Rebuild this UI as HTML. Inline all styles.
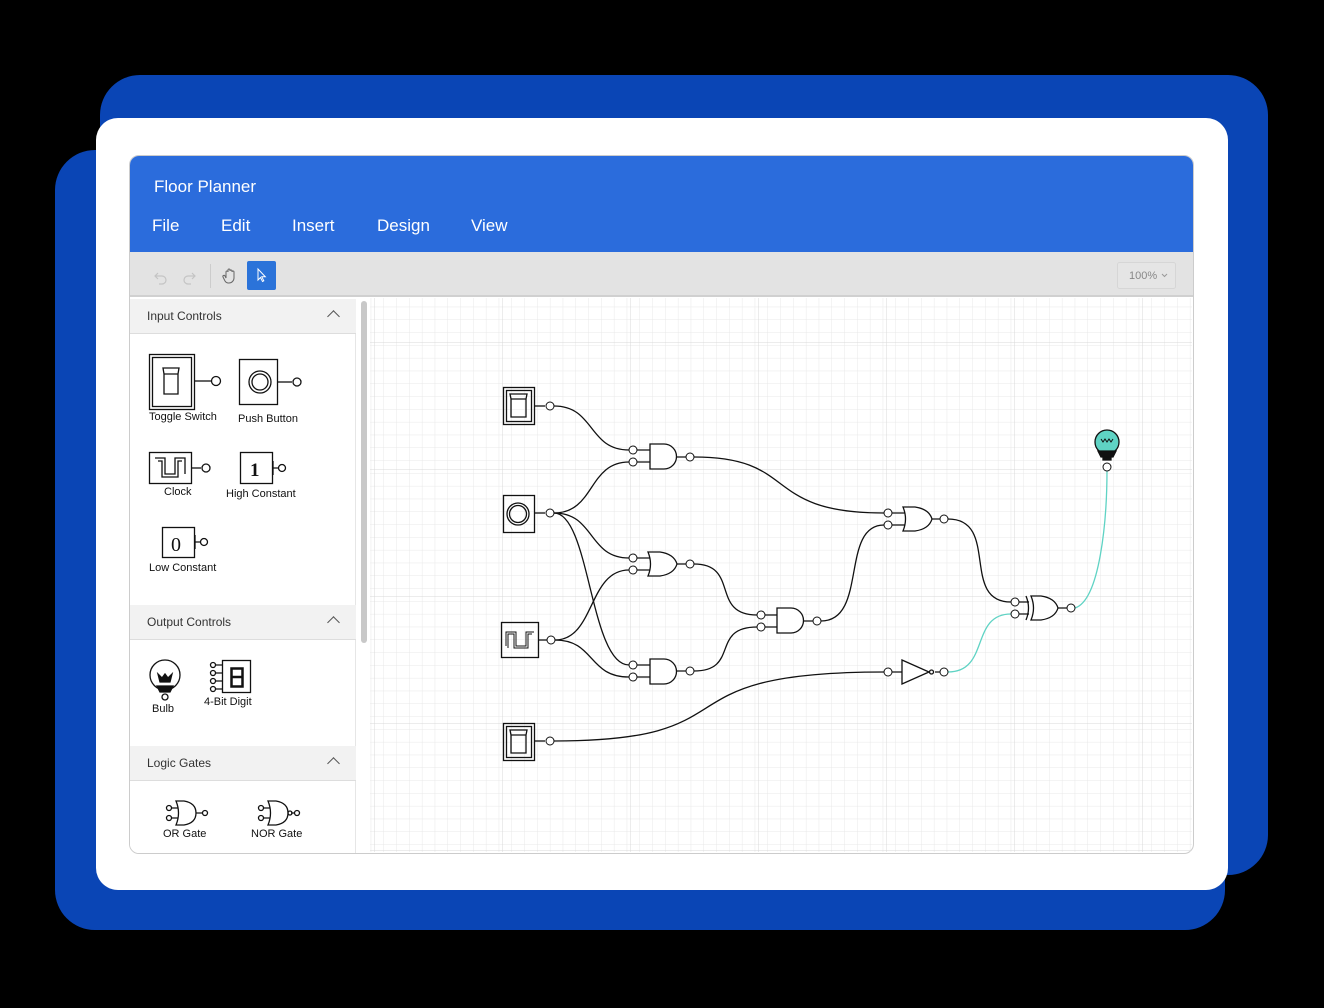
<!DOCTYPE html>
<html><head><meta charset="utf-8"><style>
*{margin:0;padding:0;box-sizing:border-box}
body{width:1324px;height:1008px;background:#000;position:relative;overflow:hidden;font-family:"Liberation Sans",sans-serif}
.b1{position:absolute;left:100px;top:75px;width:1168px;height:800px;background:#0a45b5;border-radius:40px}
.b2{position:absolute;left:55px;top:150px;width:1170px;height:780px;background:#0a45b5;border-radius:40px}
.card{position:absolute;left:96px;top:118px;width:1132px;height:772px;background:#fff;border-radius:22px}
.app{position:absolute;left:129px;top:155px;width:1065px;height:699px;border:1px solid #ccc;border-radius:10px;overflow:hidden;background:#fff}
.hdr{position:absolute;left:0;top:0;width:100%;height:96px;background:#2b6cdc;color:#fff}
.title{position:absolute;left:24px;top:21px;font-size:17px}
.menu span{position:absolute;top:60px;font-size:17px}
.tb{position:absolute;left:0;top:96px;width:100%;height:45px;background:#e3e3e3;border-bottom:2px solid #d0d0d0}
.side{position:absolute;left:0;top:143px;width:226px;height:560px;background:#fff;border-right:1px solid #e6e6e6}
.sh{position:absolute;left:0;width:226px;height:35px;background:#f2f2f2;border-bottom:1px solid #ddd;font-size:12px;color:#333;padding:10px 0 0 17px}
.sh i{position:absolute;right:18px;top:13px;width:9px;height:9px;border-left:1.3px solid #555;border-top:1.3px solid #555;transform:rotate(45deg)}
.lbl{position:absolute;font-size:11px;color:#111;white-space:nowrap}
</style></head><body>
<div class="b1"></div><div class="b2"></div>
<div class="card"></div>
<div class="app">
 <div class="hdr"><div class="title">Floor Planner</div>
  <div class="menu"><span style="left:22px">File</span><span style="left:91px">Edit</span><span style="left:162px">Insert</span><span style="left:247px">Design</span><span style="left:341px">View</span></div></div>
 <div class="tb">
  <svg width="1065" height="45" style="position:absolute;left:0;top:0">
   <path d="M26 24 l-3 -3 l3 -3 M23 21 h7 a4 4 0 0 1 0 8 h-3" fill="none" stroke="#c4c4c4" stroke-width="1.2" transform="translate(2,3)"/>
   <path d="M66 24 l3 -3 l-3 -3 M69 21 h-7 a4 4 0 0 0 0 8 h3" fill="none" stroke="#c4c4c4" stroke-width="1.2" transform="translate(-4,3)"/>
   <line x1="80.5" y1="12" x2="80.5" y2="36" stroke="#ccc"/>
   <path d="M96 26 v-6 a1 1 0 0 1 2 0 v-2 a1 1 0 0 1 2 0 v1 a1 1 0 0 1 2 0 v1 a1 1 0 0 1 2 0 v6 a5 5 0 0 1 -5 5 h-1 a4 4 0 0 1 -3 -2 l-2 -4 a1 1 0 0 1 2 -1 z" fill="none" stroke="#666" stroke-width="1"/>
   <rect x="117" y="9" width="29" height="29" rx="2" fill="#2b73d9"/>
   <path d="M128 17 v11 l2.5 -2.5 l2 4 l1.3 -.7 l-2 -4 h3.5 z" fill="none" stroke="#fff" stroke-width="1"/>
   <rect x="987.5" y="10.5" width="58" height="26" rx="2" fill="#e5e5e5" stroke="#d6d6d6"/>
   <text x="999" y="27" font-size="11" fill="#888" font-family="Liberation Sans">100%</text>
   <path d="M1032 22 l2.5 2.5 l2.5 -2.5" fill="none" stroke="#999"/>
  </svg>
 </div>
 <div class="side">
  <div class="sh" style="top:0">Input Controls<i></i></div>
  <div class="sh" style="top:306px">Output Controls<i></i></div>
  <div class="sh" style="top:447px">Logic Gates<i></i></div>
  <div class="lbl" style="left:19px;top:112px">Toggle Switch</div>
  <div class="lbl" style="left:108px;top:114px">Push Button</div>
  <div class="lbl" style="left:34px;top:187px">Clock</div>
  <div class="lbl" style="left:96px;top:189px">High Constant</div>
  <div class="lbl" style="left:19px;top:263px">Low Constant</div>
  <div class="lbl" style="left:22px;top:404px">Bulb</div>
  <div class="lbl" style="left:74px;top:397px">4-Bit Digit</div>
  <div class="lbl" style="left:33px;top:529px">OR Gate</div>
  <div class="lbl" style="left:121px;top:529px">NOR Gate</div>
 </div>
 <div style="position:absolute;left:231px;top:145px;width:6px;height:342px;background:#c8c8c8;border-radius:3px"></div>
</div>
<svg width="1324" height="1008" style="position:absolute;left:0;top:0">
 <defs>
  <pattern id="mi" x="0" y="0" width="12.8" height="12.8" patternUnits="userSpaceOnUse">
   <path d="M12.8 0 V12.8 M0 12.8 H12.8" stroke="#e8e8e8" stroke-width="1" fill="none"/></pattern>
  <pattern id="ma" x="374" y="342" width="128" height="127" patternUnits="userSpaceOnUse">
   <path d="M0 0 V127 M0 0 H128" stroke="#d8d8d8" stroke-width="1" fill="none"/></pattern>
 </defs>
 <rect x="370" y="298" width="822" height="554" fill="url(#mi)"/>
 <rect x="370" y="298" width="822" height="554" fill="url(#ma)"/>
 <text x="250" y="476" font-size="19" font-weight="bold" font-family="Liberation Serif" fill="#111">1</text>
 <text x="171" y="551" font-size="20" font-family="Liberation Serif" fill="#111">0</text>
 <g fill="none" stroke="#111" stroke-width="1.3">
  <rect x="149.5" y="354.5" width="45" height="55"/><rect x="152.5" y="357.5" width="39" height="49"/>
  <path d="M163 368 h16 l-1 6 h-14 z M164 374 v20 h14 v-20"/>
  <path d="M195 381 h16"/><circle cx="216" cy="381" r="4.5"/>
  <rect x="239.5" y="359.5" width="38" height="45"/><circle cx="260" cy="382" r="11"/><circle cx="260" cy="382" r="8"/>
  <path d="M278 382 h14"/><circle cx="297" cy="382" r="4"/>
  <rect x="149.5" y="452.5" width="42" height="31"/><path d="M155 458 h10 v16 h10 v-16 h10 v16 M158 461 h4 v16 h16 v-16 h4"/>
  <path d="M192 468 h9"/><circle cx="206" cy="468" r="4"/>
  <rect x="240.5" y="452.5" width="32" height="31"/><path d="M273 461 v14 M273 468 h5"/><circle cx="282" cy="468" r="3.5"/>
  <rect x="162.5" y="527.5" width="32" height="30"/><path d="M195 535 v14 M195 542 h5"/><circle cx="204" cy="542" r="3.5"/>
  <circle cx="165" cy="675" r="15"/><path d="M158 674 l4 4 l3 -4 l3 4 l4 -4 l-2 8 h-10 z" fill="#111"/><path d="M157 686 h16 l-3 6 h-10z" fill="#111"/><circle cx="165" cy="697" r="3"/>
  <rect x="222.5" y="660.5" width="28" height="32"/><rect x="231.5" y="668.5" width="11" height="18" stroke-width="2.5"/><path d="M232 677 h10" stroke-width="2.5"/>
  <path d="M216 665 h6 M216 673 h6 M216 681 h6 M216 689 h6"/><circle cx="213" cy="665" r="2.5"/><circle cx="213" cy="673" r="2.5"/><circle cx="213" cy="681" r="2.5"/><circle cx="213" cy="689" r="2.5"/>
  <path d="M176 801 h8 q12 2 12 12 q0 10 -12 12 h-8 q5 -12 0 -24 z M172 808 h6 M172 818 h6 M196 813 h6"/><circle cx="169" cy="808" r="2.5"/><circle cx="169" cy="818" r="2.5"/><circle cx="205" cy="813" r="2.5"/>
  <path d="M268 801 h8 q12 2 12 12 q0 10 -12 12 h-8 q5 -12 0 -24 z M264 808 h6 M264 818 h6 M291 813 h4"/><circle cx="261" cy="808" r="2.5"/><circle cx="261" cy="818" r="2.5"/><circle cx="290" cy="813" r="2"/><circle cx="297" cy="813" r="2.5"/>

  <rect x="503.5" y="387.5" width="31" height="37"/><rect x="506.5" y="390.5" width="25" height="31"/><path d="M510 394 h17 l-1 5 h-15z M511 399 v18 h15 v-18"/>
  <path d="M535 406 h10"/>
  <rect x="503.5" y="495.5" width="31" height="37"/><circle cx="518" cy="514" r="11"/><circle cx="518" cy="514" r="8.5"/><path d="M535 513 h10"/>
  <rect x="501.5" y="622.5" width="37" height="35"/><path d="M506 646 v-14 h10 v14 h10 v-14 h8 M508 648 v-14 h6 v14 h14 v-14 h4" stroke-width="1"/><path d="M539 640 h8"/>
  <rect x="503.5" y="723.5" width="31" height="37"/><rect x="506.5" y="726.5" width="25" height="31"/><path d="M510 730 h17 l-1 5 h-15z M511 735 v18 h15 v-18"/><path d="M535 741 h10"/>
  <path d="M554 406 C 595 406, 588 450, 629 450"/>
  <path d="M554 513 C 595 513, 588 462, 629 462"/>
  <path d="M554 513 C 595 513, 588 558, 629 558"/>
  <path d="M554 513 C 590 513, 590 665, 629 665"/>
  <path d="M555 640 C 595 640, 588 570, 629 570"/>
  <path d="M555 640 C 595 640, 588 677, 629 677"/>
  <path d="M694 457 C 800 457, 760 513, 884 513"/>
  <path d="M694 564 C 740 564, 710 615, 757 615"/>
  <path d="M694 671 C 740 671, 710 627, 757 627"/>
  <path d="M821 621 C 868 621, 840 525, 884 525"/>
  <path d="M948 519 C 1000 519, 960 602, 1011 602"/>
  <path d="M554 741 C 760 741, 650 672, 884 672"/>
  <path d="M637 450 h13 M637 462 h13 M676 457 h10"/><path d="M650 444 h14 a12.5 12.5 0 0 1 0 25 h-14 z" fill="#fff"/>
  <path d="M637 558 h13 M637 570 h13 M677 564 h9"/><path d="M648 552 h12 q14 2 17 12 q-3 10 -17 12 h-12 q5 -12 0 -24 z" fill="#fff"/>
  <path d="M637 665 h13 M637 677 h13 M676 671 h10"/><path d="M650 659 h14 a12.5 12.5 0 0 1 0 25 h-14 z" fill="#fff"/>
  <path d="M765 615 h13 M765 627 h13 M803 621 h10"/><path d="M777 608 h14 a12.5 12.5 0 0 1 0 25 h-14 z" fill="#fff"/>
  <path d="M892 513 h13 M892 525 h13 M930 519 h10"/><path d="M903 507 h12 q14 2 17 12 q-3 10 -17 12 h-12 q5 -12 0 -24 z" fill="#fff"/>
  <path d="M1019 602 h10 M1019 614 h10 M1057 608 h10"/><path d="M1031 596 h10 q14 2 17 12 q-3 10 -17 12 h-10 q5 -12 0 -24 z" fill="#fff"/><path d="M1026 596 q5 12 0 24"/>
  <path d="M892 672 h10 M935 672 h5"/><path d="M902 660 l27 12 l-27 12 z" fill="#fff"/><circle cx="931.5" cy="672" r="2"/>
  <g stroke="#5fd3c4" stroke-width="1.3"><path d="M948 672 C 990 672, 970 614, 1011 614"/><path d="M1075 608 C 1100 600, 1107 520, 1107 470"/></g>
  <g fill="#fff" stroke-width="1">
   <circle cx="550" cy="406" r="4"/><circle cx="550" cy="513" r="4"/><circle cx="551" cy="640" r="4"/><circle cx="550" cy="741" r="4"/>
   <circle cx="633" cy="450" r="4"/><circle cx="633" cy="462" r="4"/><circle cx="690" cy="457" r="4"/>
   <circle cx="633" cy="558" r="4"/><circle cx="633" cy="570" r="4"/><circle cx="690" cy="564" r="4"/>
   <circle cx="633" cy="665" r="4"/><circle cx="633" cy="677" r="4"/><circle cx="690" cy="671" r="4"/>
   <circle cx="761" cy="615" r="4"/><circle cx="761" cy="627" r="4"/><circle cx="817" cy="621" r="4"/>
   <circle cx="888" cy="513" r="4"/><circle cx="888" cy="525" r="4"/><circle cx="944" cy="519" r="4"/>
   <circle cx="1015" cy="602" r="4"/><circle cx="1015" cy="614" r="4"/><circle cx="1071" cy="608" r="4"/>
   <circle cx="888" cy="672" r="4"/><circle cx="944" cy="672" r="4"/><circle cx="1107" cy="467" r="4"/>
  </g>
  <circle cx="1107" cy="442" r="12" fill="#5fd3c4" stroke="#111"/>
  <path d="M1101 439 l2 3 l2 -3 l2 3 l2 -3 l2 3 l2 -3" stroke-width="1"/>
  <path d="M1098 451 h18 l-3 6 h-12 z" fill="#111"/><path d="M1103 457 h8 v3 h-8z" fill="#111"/>
 </g>
</svg>
</body></html>
